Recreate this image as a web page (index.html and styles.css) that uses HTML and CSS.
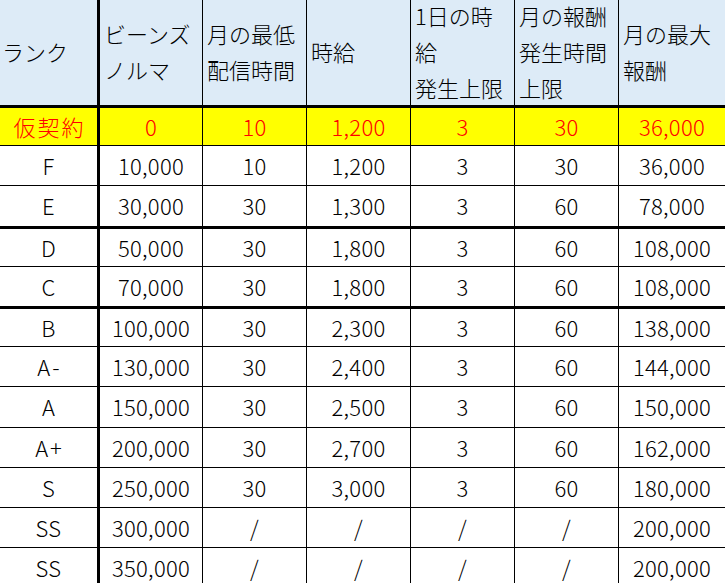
FILE: index.html
```html
<!DOCTYPE html>
<html lang="ja">
<head>
<meta charset="utf-8">
<title>ランク表</title>
<link rel="stylesheet" href="styles.css">
</head>
<body>
<div class="sheet">
  <div class="c h first"><span>ランク</span></div>
  <div class="c h"><span>ビーンズ</span><span>ノルマ</span></div>
  <div class="c h"><span>月の最低</span><span>配信時間</span></div>
  <div class="c h"><span>時給</span></div>
  <div class="c h"><span>1日の時</span><span>給</span><span>発生上限</span></div>
  <div class="c h"><span>月の報酬</span><span>発生時間</span><span>上限</span></div>
  <div class="c h last"><span>月の最大</span><span>報酬</span></div>

  <div class="c y first wide">仮契約</div><div class="c y">0</div><div class="c y">10</div><div class="c y">1,200</div><div class="c y">3</div><div class="c y">30</div><div class="c y last">36,000</div>

  <div class="c first">F</div><div class="c">10,000</div><div class="c">10</div><div class="c">1,200</div><div class="c">3</div><div class="c">30</div><div class="c last">36,000</div>

  <div class="c first tb">E</div><div class="c tb">30,000</div><div class="c tb">30</div><div class="c tb">1,300</div><div class="c tb">3</div><div class="c tb">60</div><div class="c last tb">78,000</div>

  <div class="c first">D</div><div class="c">50,000</div><div class="c">30</div><div class="c">1,800</div><div class="c">3</div><div class="c">60</div><div class="c last">108,000</div>

  <div class="c first tb">C</div><div class="c tb">70,000</div><div class="c tb">30</div><div class="c tb">1,800</div><div class="c tb">3</div><div class="c tb">60</div><div class="c last tb">108,000</div>

  <div class="c first">B</div><div class="c">100,000</div><div class="c">30</div><div class="c">2,300</div><div class="c">3</div><div class="c">60</div><div class="c last">138,000</div>

  <div class="c first wide">A-</div><div class="c">130,000</div><div class="c">30</div><div class="c">2,400</div><div class="c">3</div><div class="c">60</div><div class="c last">144,000</div>

  <div class="c first">A</div><div class="c">150,000</div><div class="c">30</div><div class="c">2,500</div><div class="c">3</div><div class="c">60</div><div class="c last">150,000</div>

  <div class="c first wide">A+</div><div class="c">200,000</div><div class="c">30</div><div class="c">2,700</div><div class="c">3</div><div class="c">60</div><div class="c last">162,000</div>

  <div class="c first">S</div><div class="c">250,000</div><div class="c">30</div><div class="c">3,000</div><div class="c">3</div><div class="c">60</div><div class="c last">180,000</div>

  <div class="c first">SS</div><div class="c">300,000</div><div class="c">/</div><div class="c">/</div><div class="c">/</div><div class="c">/</div><div class="c last">200,000</div>

  <div class="c first">SS</div><div class="c">350,000</div><div class="c">/</div><div class="c">/</div><div class="c">/</div><div class="c">/</div><div class="c last">200,000</div>
</div>
</body>
</html>
```
FILE: styles.css
```css
html, body {
  margin: 0;
  padding: 0;
  overflow: hidden;
  background: #ffffff;
}

.sheet {
  display: grid;
  width: 725px;
  grid-template-columns: 100px 103px 104px 104px 104px 104px 1fr;
  grid-template-rows: 108px 38px 40px 43px 38px 42px 38px 40px 41px 40px 40px 40px 40px;
  font-family: "Noto Sans CJK JP", "Noto Sans", sans-serif;
  font-weight: 300;
  font-size: 22px;
  color: #000000;
}

.c {
  box-sizing: border-box;
  border-right: 1px solid #000000;
  border-bottom: 1px solid #000000;
  display: flex;
  align-items: center;
  justify-content: center;
  white-space: nowrap;
  line-height: 1;
  letter-spacing: 0.3px;
  padding-bottom: 2px;
}

.c.first {
  border-right-width: 3px;
}

.c.wide {
  letter-spacing: 2px;
  padding-left: 2px;
}

.c.last {
  border-right: none;
}

.c.tb {
  border-bottom-width: 3px;
}

.c.h {
  background: #ddebf7;
  border-bottom-width: 3px;
  flex-direction: column;
  align-items: flex-start;
  justify-content: center;
  padding: 0 0 4px 4px;
  line-height: 36px;
  letter-spacing: 0;
}

.c.h.first {
  padding-left: 2px;
}

.c.y {
  background: #ffff00;
  color: #ff0000;
}
```
